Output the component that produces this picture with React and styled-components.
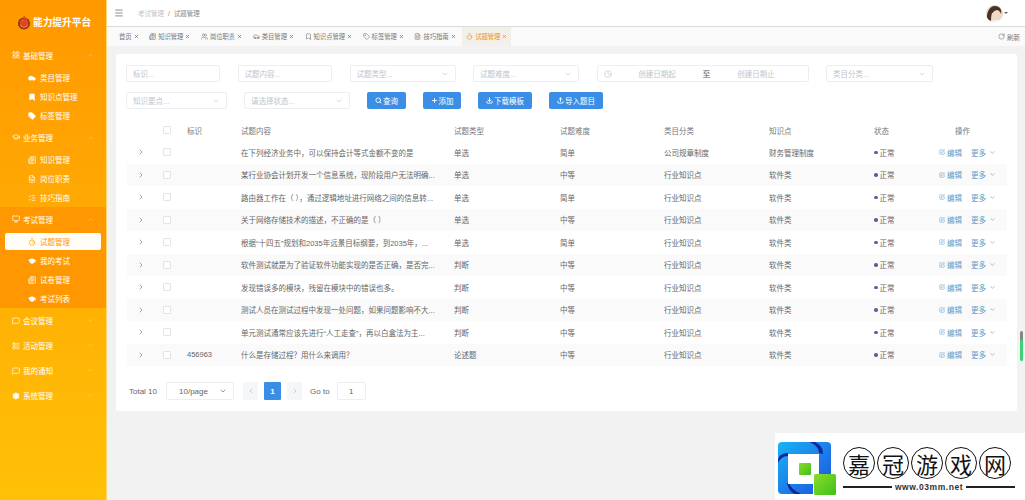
import React from "react"
import styled, { createGlobalStyle } from "styled-components"
import {
  Menu,
  X,
  LayoutGrid,
  Car,
  Bookmark,
  Tag,
  GraduationCap,
  Monitor,
  Timer,
  Newspaper,
  MessageSquare,
  LayoutList,
  Settings,
  ChevronDown,
  ChevronUp,
  ChevronRight,
  ChevronLeft,
  Search,
  Plus,
  Download,
  Upload,
  RotateCw,
  Clock,
  SquarePen,
  FileText,
  Users,
  ListChecks,
} from "lucide-react"

const FONT = `"Liberation Sans", "Noto Sans CJK SC", sans-serif`

const GlobalStyle = createGlobalStyle`
  html, body {
    margin: 0;
    height: 100%;
    overflow: hidden;
    background: #f2f2f2;
    font-family: ${FONT};
  }
  * { box-sizing: border-box; }
`

const menu = [
  {
    title: "基础管理",
    icon: LayoutGrid,
    open: true,
    children: [
      ["类目管理", Car, true],
      ["知识点管理", Bookmark, true],
      ["标签管理", Tag, true],
    ],
  },
  {
    title: "业务管理",
    icon: GraduationCap,
    open: true,
    children: [
      ["知识管理", Newspaper],
      ["岗位职责", FileText],
      ["技巧指南", ListChecks],
    ],
  },
  {
    title: "考试管理",
    icon: Monitor,
    open: true,
    dark: true,
    children: [
      ["试题管理", Timer, false, true],
      ["我的考试", GraduationCap, true],
      ["试卷管理", Newspaper],
      ["考试列表", GraduationCap, true],
    ],
  },
  { title: "会议管理", icon: MessageSquare },
  { title: "活动管理", icon: LayoutList },
  { title: "我的通知", icon: MessageSquare },
  { title: "系统管理", icon: Settings, filled: true },
]

const tabs = [
  ["首页"],
  ["知识管理", Newspaper],
  ["岗位职责", Users],
  ["类目管理", Car],
  ["知识点管理", Bookmark],
  ["标签管理", Tag],
  ["技巧指南", FileText],
  ["试题管理", Timer, true],
]

const rows = [
  ["", "在下列经济业务中，可以保持会计等式金额不变的是", "单选", "简单", "公司规章制度", "财务管理制度"],
  ["", "某行业协会计划开发一个信息系统，现阶段用户无法明确...", "单选", "中等", "行业知识点", "软件类"],
  ["", "路由器工作在（ ），通过逻辑地址进行网络之间的信息转...", "单选", "简单", "行业知识点", "软件类"],
  ["", "关于网络存储技术的描述，不正确的是（ ）", "单选", "中等", "行业知识点", "软件类"],
  ["", "根据“十四五”规划和2035年远景目标纲要，到2035年，...", "单选", "简单", "行业知识点", "软件类"],
  ["", "软件测试就是为了验证软件功能实现的是否正确，是否完...", "判断", "中等", "行业知识点", "软件类"],
  ["", "发现错误多的模块，残留在模块中的错误也多。", "判断", "中等", "行业知识点", "软件类"],
  ["", "测试人员在测试过程中发现一处问题，如果问题影响不大...", "判断", "中等", "行业知识点", "软件类"],
  ["", "单元测试通常应该先进行“人工走查”，再以白盒法为主...", "判断", "中等", "行业知识点", "软件类"],
  ["456963", "什么是存储过程？用什么来调用？", "论述题", "中等", "行业知识点", "软件类"],
]

const Page = styled.div`
  display: flex;
  width: 1025px;
  height: 500px;
  position: relative;
  overflow: hidden;
`

const Sidebar = styled.aside`
  width: 107px;
  flex: none;
  color: #fff;
  background: linear-gradient(180deg, #ff9800 0%, #ffc107 100%);
  border-right: 1px solid #ffd76a;
`

const Brand = styled.div`
  height: 43px;
  display: flex;
  align-items: center;
  gap: 2px;
  padding: 1px 0 0 17px;
  font-size: 9.7px;
  font-weight: 700;
`

const Group = styled.div`
  background: ${(p) => (p.$dark ? "#ff9800" : "transparent")};
`

const GroupTitle = styled.div`
  height: ${(p) => (p.$open ? 24 : 25)}px;
  display: flex;
  align-items: center;
  gap: 3px;
  padding: 0 12px;
  font-size: 7.5px;
  svg:last-child {
    margin-left: auto;
    opacity: 0.45;
  }
`

const SubList = styled.div`
  padding-top: 1px;
`

const SubItem = styled.div`
  height: ${(p) => (p.$active ? 17 : 19)}px;
  margin: ${(p) => (p.$active ? "1px 5px" : "0")};
  padding-left: ${(p) => (p.$active ? 23 : 28)}px;
  display: flex;
  align-items: center;
  gap: 4px;
  font-size: 7.5px;
  border-radius: 2px;
  color: ${(p) => (p.$active ? "#ff9800" : "#fff")};
  background: ${(p) => (p.$active ? "#fffdf8" : "transparent")};
`

const Main = styled.main`
  flex: 1;
  min-width: 0;
  display: flex;
  flex-direction: column;
`

const Header = styled.header`
  height: 27px;
  flex: none;
  display: flex;
  align-items: center;
  gap: 14px;
  padding: 0 17px 0 7px;
  background: #fff;
  border-bottom: 1px solid #dcdcdc;
  color: #777;
`

const Crumbs = styled.div`
  flex: 1;
  font-size: 6.5px;
  color: #8a8a8a;
  span {
    color: #c4c4c4;
  }
  i {
    font-style: normal;
    margin: 0 4px;
  }
`

const AvatarWrap = styled.div`
  display: flex;
  align-items: center;
  gap: 1px;
`

const Caret = styled.span`
  border: 2px solid transparent;
  border-top: 2.5px solid #666;
  margin-top: 2px;
`

const TabBar = styled.nav`
  height: 19px;
  flex: none;
  display: flex;
  align-items: center;
  padding-left: 8px;
  background: #fafafa;
`

const Tab = styled.div`
  height: 100%;
  display: flex;
  align-items: center;
  gap: 2px;
  padding: 0 4px;
  margin-right: 2.6px;
  font-size: 6.3px;
  white-space: nowrap;
  color: ${(p) => (p.$active ? "#e8912a" : "#777")};
  background: ${(p) => (p.$active ? "#f3f0ea" : "transparent")};
`

const Refresh = styled.div`
  margin-left: auto;
  padding-right: 5px;
  display: flex;
  align-items: center;
  gap: 2px;
  font-size: 6.5px;
  color: #777;
`

const Content = styled.div`
  flex: 1;
  padding: 8px 8px 0 9px;
  background: #f2f2f2;
`

const Card = styled.section`
  height: 357px;
  padding: 11px 10px 0 10px;
  background: #fff;
  border-radius: 2px;
`

const FormRow = styled.div`
  display: flex;
  align-items: center;
  gap: ${(p) => p.$gap}px;
  margin-bottom: 10px;
`

const Field = styled.div`
  width: ${(p) => p.$w}px;
  height: 17px;
  flex: none;
  display: flex;
  align-items: center;
  justify-content: space-between;
  padding: 0 6px;
  font-size: 7.5px;
  color: #c0c4cc;
  background: #fff;
  border: 1px solid #eceef2;
  border-radius: 2px;
`

const DateSlot = styled.span`
  flex: 1;
  text-align: center;
`

const DateSep = styled.span`
  color: #555;
  font-size: 8px;
`

const Btn = styled.button`
  width: ${(p) => p.$w}px;
  height: 17px;
  flex: none;
  display: flex;
  align-items: center;
  justify-content: center;
  gap: 1px;
  padding: 0;
  font: 7.5px ${FONT};
  color: #fff;
  background: #3a8ee6;
  border: none;
  border-radius: 2px;
`

const Grid = styled.div`
  display: grid;
  grid-template-columns: 26px 27px 54px 213px 106px 104px 105px 105px 65px 75px;
  align-items: center;
  width: 880px;
  margin-left: 1px;
  font-size: 7.5px;
  color: #666;
  background: ${(p) => (p.$striped ? "#fafafa" : "#fff")};
  height: ${(p) => (p.$head ? 22 : 22.5)}px;
`

const Cell = styled.div`
  padding-left: 7px;
  white-space: nowrap;
  overflow: hidden;
`

const HeadCell = styled(Cell)`
  color: #777;
`

const OpsHead = styled(Cell)`
  padding-left: 23px;
  color: #777;
`

const ExpandCell = styled.div`
  display: flex;
  justify-content: center;
  padding-left: 2px;
  color: #777;
`

const CheckCell = styled.div`
  display: flex;
  justify-content: center;
`

const Check = styled.span`
  width: 8px;
  height: 8px;
  background: #fff;
  border: 1px solid #e2e4e8;
  border-radius: 1px;
`

const Status = styled(Cell)`
  display: flex;
  align-items: center;
  gap: 2px;
  &::before {
    content: "";
    width: 3.5px;
    height: 3.5px;
    border-radius: 50%;
    background: #5a6299;
  }
`

const Ops = styled(Cell)`
  display: flex;
  align-items: center;
  color: #5b9cc9;
  svg:first-child {
    margin-right: 2px;
  }
  em {
    font-style: normal;
    margin: 0 3px 0 9px;
  }
`

const Pager = styled.div`
  display: flex;
  align-items: center;
  height: 18px;
  margin: 16px 0 0 3px;
  font-size: 8px;
  color: #666;
`

const PageSelect = styled(Field)`
  margin: 0 9px 0 9px;
  height: 18px;
  padding: 0 6px 0 12px;
  font-size: 8px;
  color: #666;
`

const PageBtn = styled.div`
  width: ${(p) => (p.$active ? 17 : 15)}px;
  height: 18px;
  margin-right: 6px;
  display: flex;
  align-items: center;
  justify-content: center;
  font-weight: ${(p) => (p.$active ? 700 : 400)};
  color: ${(p) => (p.$active ? "#fff" : "#b5b8bd")};
  background: ${(p) => (p.$active ? "#3a8ee6" : "#f5f6f7")};
  border-radius: 1px;
`

const GoTo = styled.span`
  margin: 0 7px 0 2px;
`

const GoInput = styled.div`
  width: 29px;
  height: 18px;
  display: flex;
  align-items: center;
  justify-content: center;
  border: 1px solid #eceef2;
  border-radius: 2px;
`

const ScrollThumb = styled.div`
  position: absolute;
  right: 2px;
  top: 331px;
  width: 3px;
  height: 30px;
  border-radius: 2px;
  background: linear-gradient(180deg, #7c8a80 0%, #7c8a80 25%, #3fd07a 35%, #3fd07a 100%);
`

const Watermark = styled.div`
  position: absolute;
  right: 0;
  bottom: 0;
  width: 250px;
  height: 67px;
  display: flex;
  align-items: flex-start;
  gap: 7px;
  padding: 9px 0 0 3px;
  background: #fff;
`

const MarkText = styled.div`
  width: 172px;
  flex: none;
`

const MarkChars = styled.div`
  display: flex;
  gap: 2px;
  margin-top: 5px;
`

const MarkChar = styled.span`
  width: 32px;
  height: 32px;
  flex: none;
  display: flex;
  align-items: center;
  justify-content: center;
  font: 22px "Noto Sans CJK SC", sans-serif;
  line-height: 1;
  color: #111;
  border: 1.5px solid #111;
  border-radius: 50%;
`

const MarkUrl = styled.div`
  display: flex;
  align-items: center;
  gap: 3px;
  margin-top: 3px;
  font: 700 8.5px "Liberation Sans", sans-serif;
  letter-spacing: 0.55px;
  color: #333;
  &::before,
  &::after {
    content: "";
    flex: 1;
    height: 1.5px;
    background: #222;
  }
`

const FlameLogo = () => (
  <svg width="14" height="16" viewBox="0 0 14 16">
    <circle cx="7" cy="9.5" r="6" fill="#8a3a12" />
    <circle cx="7" cy="9.5" r="4" fill="#ffe0a8" />
    <path d="M7 1c1 3 4 4 4 8a4 4 0 0 1-8 0c0-2 1-3 2-4 0 1 .5 1.500 1 1.500C6.800 5 6 3 7 1z" fill="#e8421c" />
  </svg>
)

const Avatar = () => (
  <svg width="17" height="17" viewBox="0 0 17 17">
    <clipPath id="av">
      <circle cx="8.500" cy="8.500" r="8.500" />
    </clipPath>
    <g clipPath="url(#av)">
      <rect width="17" height="17" fill="#e9dcc8" />
      <path d="M1 17C0 8 3 1 9 1c5 0 7 4 6 8-1-3-3-4-4-4-2 2-4 3-5 3-1 3-1 6-1 9z" fill="#4a3226" />
      <ellipse cx="10" cy="9" rx="3" ry="3.500" fill="#f4d9c4" />
      <path d="M5 17c1-3 8-3 10 0z" fill="#f7f2ea" />
    </g>
  </svg>
)

const SiteLogo = () => (
  <svg width="58" height="53" viewBox="0 0 58 53">
    <defs>
      <linearGradient id="sq" x1="0" y1="0" x2="1" y2="1">
        <stop offset="0" stopColor="#18b4f5" />
        <stop offset="1" stopColor="#1f4fe0" />
      </linearGradient>
      <linearGradient id="gr" x1="0" y1="0" x2="1" y2="1">
        <stop offset="0" stopColor="#8bdc2a" />
        <stop offset="1" stopColor="#3fbf1c" />
      </linearGradient>
    </defs>
    <rect width="53" height="52" rx="4" fill="url(#sq)" />
    <path d="M31 0h6c6 3 8 7 8 12l-4-1c0-5-4-9-10-11zM0 18c1-5 5-7 10-7v3c-5 0-8 3-10 7zM11 41c2 5 6 8 12 11h-6c-4-2-7-6-8-11z" fill="#12249a" />
    <rect x="10" y="12" width="31" height="30" fill="#fff" />
    <rect x="21" y="21" width="12" height="12" rx="1" fill="url(#gr)" />
    <rect x="36" y="32" width="22" height="21" rx="1.500" fill="url(#gr)" />
    <rect x="35" y="31" width="1" height="22" fill="#fff" />
  </svg>
)

const App = () => {
  return (
    <Page>
      <GlobalStyle />
      <Sidebar>
        <Brand>
          <FlameLogo />
          能力提升平台
        </Brand>
        {menu.map((g) => (
          <Group key={g.title} $dark={g.dark}>
            <GroupTitle $open={g.open}>
              <g.icon size={8} fill={g.filled ? "#fff" : "none"} />
              {g.title}
              {g.open ? <ChevronUp size={7} /> : <ChevronDown size={7} />}
            </GroupTitle>
            {g.children && (
              <SubList>
                {g.children.map(([label, Icon, filled, active]) => (
                  <SubItem key={label} $active={active}>
                    <Icon size={8} fill={filled ? "#fff" : "none"} />
                    {label}
                  </SubItem>
                ))}
              </SubList>
            )}
          </Group>
        ))}
      </Sidebar>
      <Main>
        <Header>
          <Menu size={10} />
          <Crumbs>
            <span>考试管理</span>
            <i>/</i>试题管理
          </Crumbs>
          <AvatarWrap>
            <Avatar />
            <Caret />
          </AvatarWrap>
        </Header>
        <TabBar>
          {tabs.map(([label, Icon, active]) => (
            <Tab key={label} $active={active}>
              {Icon && <Icon size={7} />}
              {label}
              <X size={5} strokeWidth={3.5} />
            </Tab>
          ))}
          <Refresh>
            <RotateCw size={7} />
            刷新
          </Refresh>
        </TabBar>
        <Content>
          <Card>
            <FormRow $gap={17.5}>
              <Field $w={94}>标识...</Field>
              <Field $w={94.5}>试题内容...</Field>
              <Field $w={106}>
                试题类型...
                <ChevronDown size={8} />
              </Field>
              <Field $w={106}>
                试题难度...
                <ChevronDown size={8} />
              </Field>
              <Field $w={212}>
                <Clock size={8} />
                <DateSlot>创建日期起</DateSlot>
                <DateSep>至</DateSep>
                <DateSlot>创建日期止</DateSlot>
              </Field>
              <Field $w={107}>
                类目分类...
                <ChevronDown size={8} />
              </Field>
            </FormRow>
            <FormRow $gap={17}>
              <Field $w={101}>
                知识要点...
                <ChevronDown size={8} />
              </Field>
              <Field $w={106}>
                请选择状态...
                <ChevronDown size={8} />
              </Field>
              <Btn $w={39}>
                <Search size={7} strokeWidth={3} />
                查询
              </Btn>
              <Btn $w={38}>
                <Plus size={7} strokeWidth={3} />
                添加
              </Btn>
              <Btn $w={54}>
                <Download size={7} strokeWidth={3} />
                下载模板
              </Btn>
              <Btn $w={54}>
                <Upload size={7} strokeWidth={3} />
                导入题目
              </Btn>
            </FormRow>
            <Grid $head>
              <div />
              <CheckCell>
                <Check />
              </CheckCell>
              <HeadCell>标识</HeadCell>
              <HeadCell>试题内容</HeadCell>
              <HeadCell>试题类型</HeadCell>
              <HeadCell>试题难度</HeadCell>
              <HeadCell>类目分类</HeadCell>
              <HeadCell>知识点</HeadCell>
              <HeadCell>状态</HeadCell>
              <OpsHead>操作</OpsHead>
            </Grid>
            {rows.map((r, i) => (
              <Grid key={r[1]} $striped={i % 2 === 1}>
                <ExpandCell>
                  <ChevronRight size={8} />
                </ExpandCell>
                <CheckCell>
                  <Check />
                </CheckCell>
                {r.map((text, j) => (
                  <Cell key={j}>{text}</Cell>
                ))}
                <Status>正常</Status>
                <Ops>
                  <SquarePen size={6} />
                  编辑
                  <em>更多</em>
                  <ChevronDown size={7} />
                </Ops>
              </Grid>
            ))}
            <Pager>
              Total 10
              <PageSelect $w={68}>
                10/page
                <ChevronDown size={8} />
              </PageSelect>
              <PageBtn>
                <ChevronLeft size={8} />
              </PageBtn>
              <PageBtn $active>1</PageBtn>
              <PageBtn>
                <ChevronRight size={8} />
              </PageBtn>
              <GoTo>Go to</GoTo>
              <GoInput>1</GoInput>
            </Pager>
          </Card>
        </Content>
      </Main>
      <ScrollThumb />
      <Watermark>
        <SiteLogo />
        <MarkText>
          <MarkChars>
            {["嘉", "冠", "游", "戏", "网"].map((c) => (
              <MarkChar key={c}>{c}</MarkChar>
            ))}
          </MarkChars>
          <MarkUrl>www.03mm.net</MarkUrl>
        </MarkText>
      </Watermark>
    </Page>
  )
}

export default App
